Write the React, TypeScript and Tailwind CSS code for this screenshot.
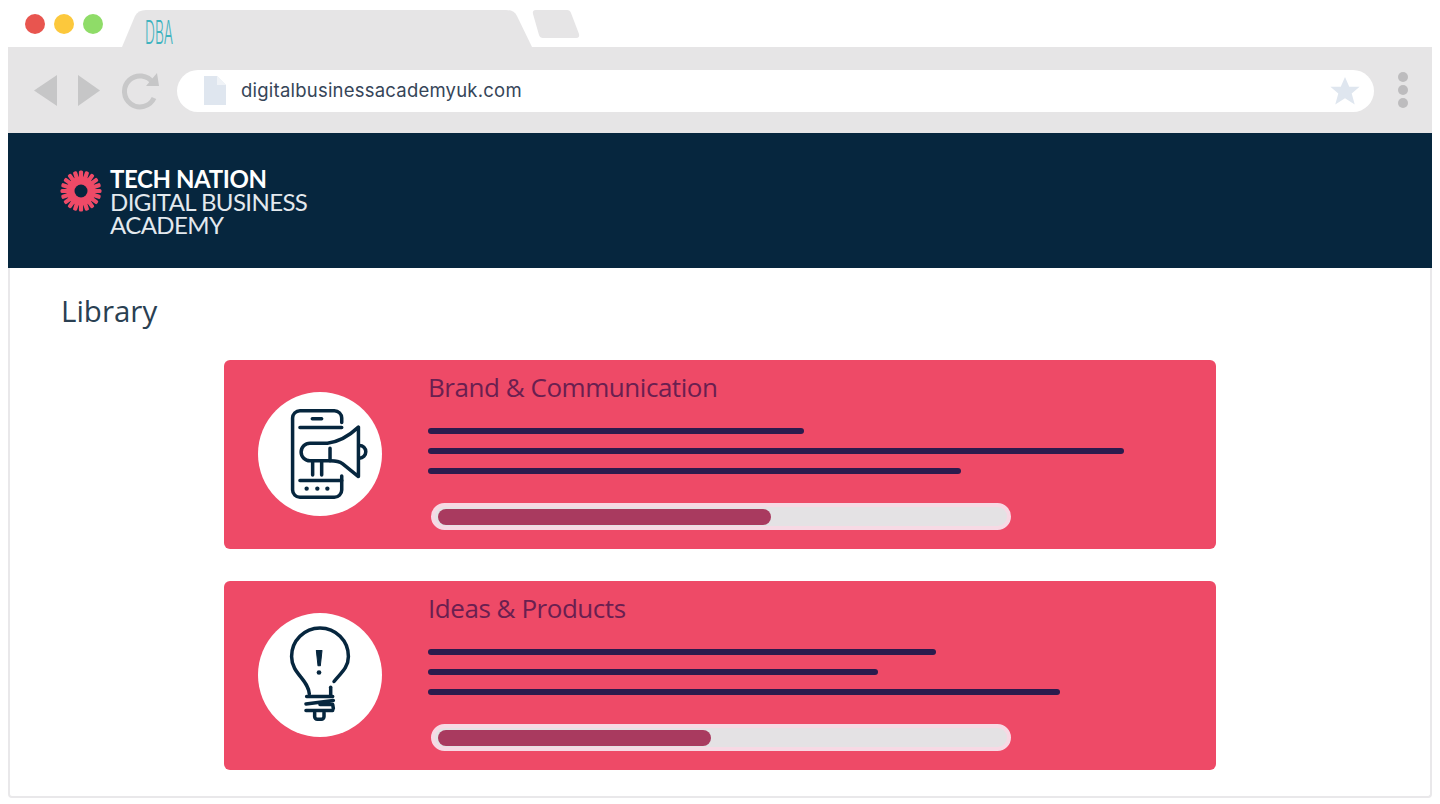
const rays = Array.from({ length: 20 }, (_, i) => i * 18);

const SunLogo = () => (
  <svg width="42" height="42" viewBox="0 0 42 42" className="shrink-0">
    {rays.map((deg) => (
      <rect key={deg} x="18.9" y="0.5" width="4.2" height="12" rx="1.5" fill="#ee4a67" transform={`rotate(${deg} 21 21)`} />
    ))}
    <circle cx="21" cy="21" r="14.5" fill="#ee4a67" />
    <circle cx="21" cy="21" r="6.5" fill="#06263e" />
  </svg>
);

const MegaphonePhone = () => (
  <svg width="124" height="124" viewBox="55 37 370 371" fill="none" stroke="#06263e" strokeWidth="10.500" strokeLinecap="round" strokeLinejoin="round">
    <path d="M305 128V115a22 22 0 0 0-22-22H180a22 22 0 0 0-22 22V330a22 22 0 0 0 22 22H283a22 22 0 0 0 22-22V288" />
    <path d="M180 143H305M180 302H305M217 117H245" />
    <path d="M210 190H262C298 186 325 170 355 142V290L308 252C298 244 290 243 270 243H210a26.500 26.500 0 0 1 0-53" />
    <path d="M270 205V243M218 243V285M245 243V285" />
    <path d="M358 197a19 19 0 0 1 0 38" />
    <path d="M200 326h.1M232 326h.1M262 326h.1" strokeWidth="13" />
  </svg>
);

const Bulb = () => (
  <svg width="124" height="124" viewBox="55 40 370 371" fill="none" stroke="#06263e" strokeWidth="10.500" strokeLinecap="round" strokeLinejoin="round">
    <path d="M208 282C205 238 155 222 155 170A85 85 0 0 1 325 170C325 205 300 222 282 245" />
    <path d="M272 262V285" />
    <path d="M200 290H278M198 312L280 302M198 332H278M240 314H278L280 326" />
    <path d="M224 338V350a8 8 0 0 0 8 8H244a8 8 0 0 0 8-8V338" />
    <path d="M229 152H246L241 198H234Z" fill="#06263e" strokeWidth="3" />
    <circle cx="237" cy="218" r="7" fill="#06263e" stroke="none" />
  </svg>
);

type Course = {
  title: string;
  icon: React.ReactNode;
  lines: string[];
  fill: string;
};

const courses: Course[] = [
  { title: "Brand & Communication", icon: <MegaphonePhone />, lines: ["w-[376px]", "w-[696px]", "w-[533px]"], fill: "w-[333px]" },
  { title: "Ideas & Products", icon: <Bulb />, lines: ["w-[508px]", "w-[450px]", "w-[632px]"], fill: "w-[273px]" },
];

const CourseCard = ({ course }: { course: Course }) => (
  <div className="flex h-[189px] w-[992px] items-center rounded-md bg-[#ee4a67] pl-[34px]">
    <div className="-mt-[2px] flex size-[124px] shrink-0 items-center justify-center rounded-full bg-white">{course.icon}</div>
    <div className="ml-[46px] flex h-full flex-col">
      <h2 className="mt-[11px] h-[33px] font-['Open_Sans',sans-serif] text-[26px] leading-[32px] tracking-[-0.46px] text-[#6a1f50]">{course.title}</h2>
      <div className="mt-[24px] flex flex-col gap-[14px]">
        {course.lines.map((w) => (
          <div key={w} className={`h-[6px] rounded-full bg-[#2b1b4d] ${w}`} />
        ))}
      </div>
      <div className="mt-[29px] ml-[3px] h-[27px] w-[580px] rounded-full border-[4px] border-[#f7d9e4] bg-[#e4e2e4] py-[2px] pl-[3px]">
        <div className={`h-[16px] rounded-full bg-[#a93a5f] ${course.fill}`} />
      </div>
    </div>
  </div>
);

export default function App() {
  return (
    <div className="h-[804px] w-[1440px] overflow-hidden bg-white px-[8px] pt-[10px] font-['Lato',sans-serif]">
      {/* tab strip */}
      <div className="flex h-[37px] items-start">
        <div className="ml-[17px] mt-[4px] flex gap-[9px]">
          <span className="size-[20px] rounded-full bg-[#e8554f]" />
          <span className="size-[20px] rounded-full bg-[#fcc83c]" />
          <span className="size-[20px] rounded-full bg-[#8fdc68]" />
        </div>
        <div className="relative ml-[19px] h-[37px] w-[412px]">
          <svg width="412" height="37" viewBox="0 0 412 37" className="absolute inset-0">
            <path d="M0 37L13 6Q16 0 24 0H384Q392 0 395 6L410 37Z" fill="#e6e5e6" />
          </svg>
          <span className="absolute left-[23px] top-[7px] block w-[70px] origin-left scale-x-[0.43] font-['Inter',sans-serif] text-[32px] font-light leading-[32px] text-[#3fb3bf]">DBA</span>
        </div>
        <svg width="48" height="28" viewBox="0 0 48 28" className="-ml-[2px]">
          <path d="M1 4Q0 0 4 0H35Q38 0 39 3L47 24Q48 28 44 28H11Q8 28 7 25Z" fill="#e6e5e6" />
        </svg>
      </div>

      {/* toolbar */}
      <div className="flex h-[86px] items-center bg-[#e6e5e6] pl-[26px] pr-[24px]">
        <svg width="126" height="40" viewBox="0 0 126 40" className="shrink-0" fill="#c6c6c7">
          <path d="M23 5V36L0 20.500Z" />
          <path d="M44 5V36L66 20.500Z" />
          <path d="M119 13A15.500 15.500 0 1 0 120 28" fill="none" stroke="#c8c8c9" strokeWidth="5" />
          <path d="M123 3L125 16H112Z" />
        </svg>
        <div className="ml-[17px] mt-[1px] flex h-[42px] flex-1 items-center rounded-full bg-white pl-[27px] pr-[14px]">
          <svg width="22" height="29" viewBox="0 0 22 29" className="shrink-0">
            <path d="M0 0H13L22 9V29H0Z" fill="#dfe6ef" />
            <path d="M13 0L22 9H13Z" fill="#f0f3f7" />
          </svg>
          <span className="ml-[15px] font-['Inter',sans-serif] text-[18.5px] leading-none tracking-[0.22px] text-[#364558]">digitalbusinessacademyuk.com</span>
          <svg width="30" height="28" viewBox="0 0 24 23" className="ml-auto shrink-0">
            <path d="M12 0L15.500 8H24L17.500 13.500L20 22.500L12 17.500L4 22.500L6.500 13.500L0 8H8.500Z" fill="#dfe6ef" />
          </svg>
        </div>
        <div className="ml-[24px] flex flex-col gap-[3px]">
          <span className="size-[10px] rounded-full bg-[#bdbcbe]" />
          <span className="size-[10px] rounded-full bg-[#bdbcbe]" />
          <span className="size-[10px] rounded-full bg-[#bdbcbe]" />
        </div>
      </div>

      {/* site header */}
      <header className="flex h-[135px] items-start bg-[#06263e] pl-[52px] pt-[37px]">
        <SunLogo />
        <div className="ml-[8px] -mt-[3px] text-[24px] leading-[23px] text-[#e3e9ee]">
          <div className="font-bold tracking-[-0.4px] text-white">TECH NATION</div>
          <div className="font-normal tracking-[-0.6px]">DIGITAL BUSINESS</div>
          <div className="font-normal tracking-[-0.6px]">ACADEMY</div>
        </div>
      </header>

      {/* content */}
      <main className="flex h-[530px] flex-col rounded-b-sm border-x-2 border-b-2 border-[#e9e8ea] bg-white">
        <h1 className="ml-[51px] mt-[25px] h-[36px] font-['Open_Sans',sans-serif] text-[29.5px] leading-[36px] text-[#2a4052]">Library</h1>
        <div className="ml-[214px] mt-[31px] flex flex-col gap-[32px]">
          {courses.map((c) => (
            <CourseCard key={c.title} course={c} />
          ))}
        </div>
      </main>
    </div>
  );
}
